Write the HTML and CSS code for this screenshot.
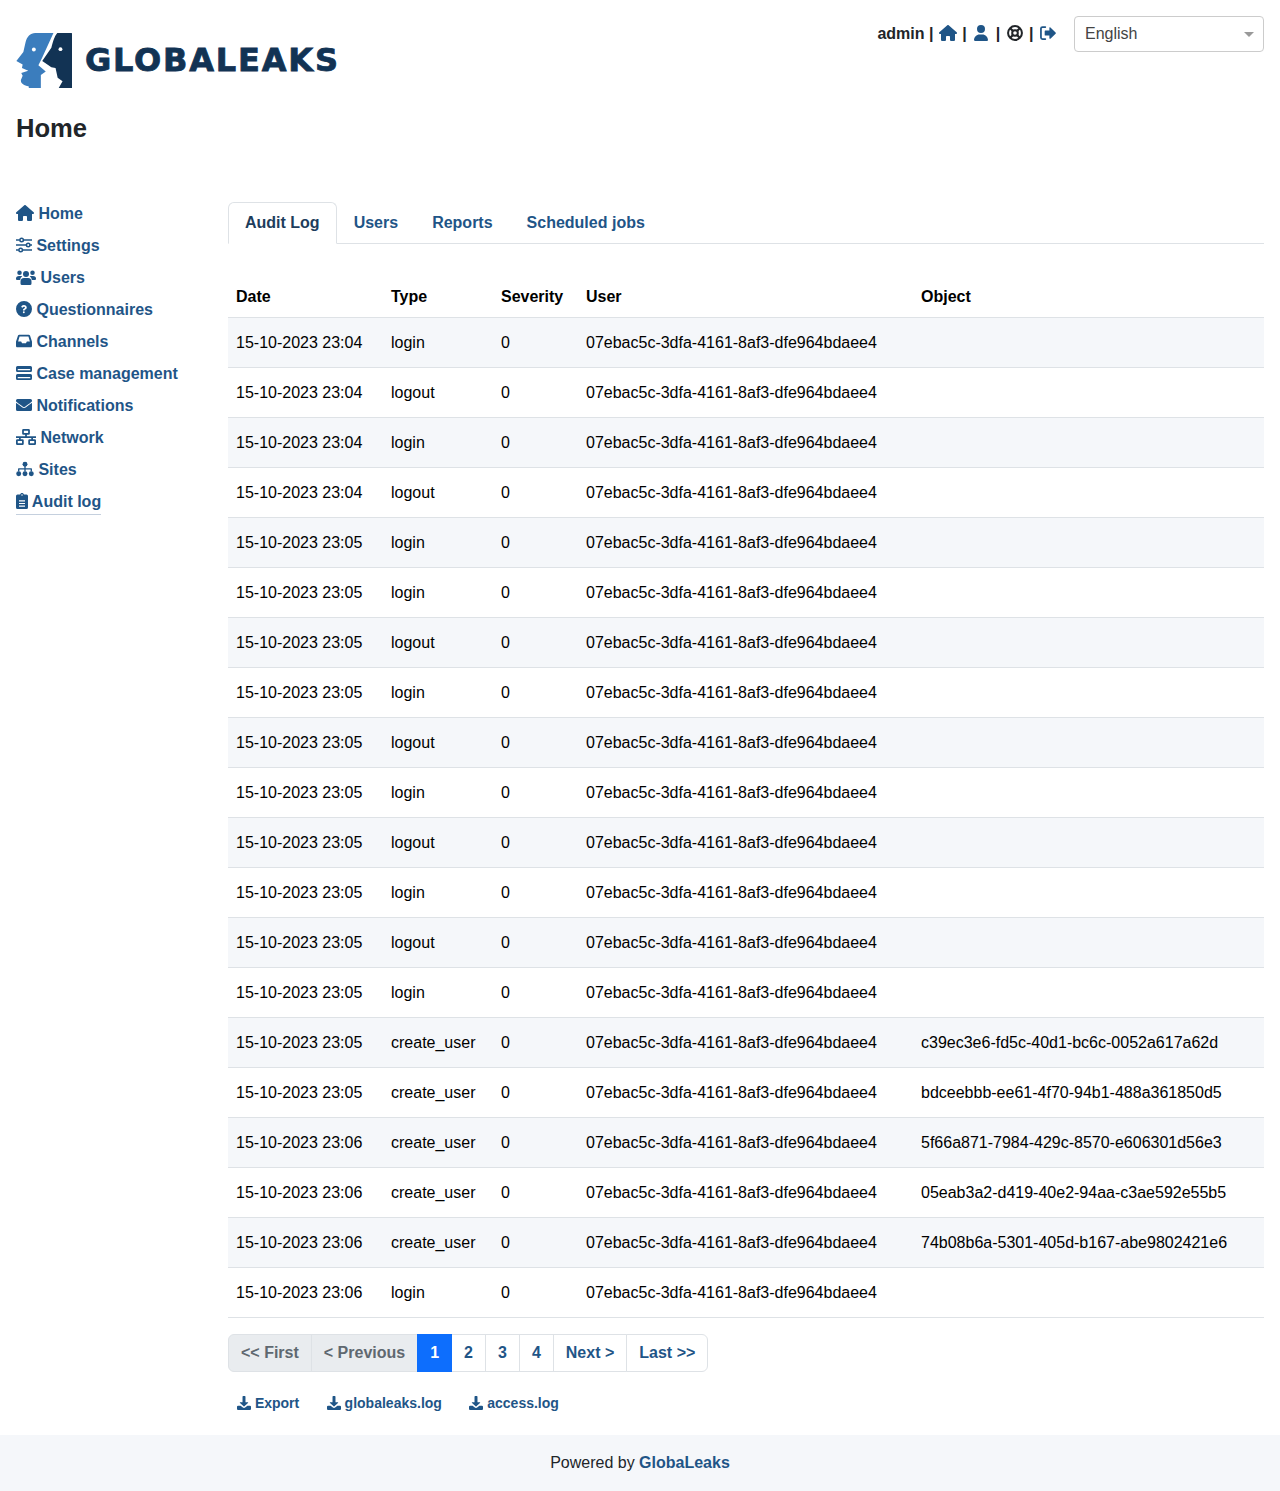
FILE: index.html
```html
<!DOCTYPE html>
<html lang="en">

<head>
    <meta charset="utf-8">
    <meta name="viewport" content="width=device-width, initial-scale=1.0">
    <title>GlobaLeaks - Home</title>
    <link rel="stylesheet" href="styles.css">
</head>

<body>
    <svg class="sprite" xmlns="http://www.w3.org/2000/svg">
        <symbol id="i-home" viewBox="0 0 576 512"><path d="M575.8 255.5c0 18-15 32.1-32 32.1h-32l.7 160.2c0 2.7-.2 5.4-.5 8.1V472c0 22.1-17.9 40-40 40H456c-1.1 0-2.2 0-3.3-.1c-1.4 .1-2.8 .1-4.2 .1H416 392c-22.1 0-40-17.9-40-40V448 384c0-17.7-14.3-32-32-32H256c-17.7 0-32 14.3-32 32v64 24c0 22.1-17.9 40-40 40H160 128.1c-1.5 0-3-.1-4.5-.2c-1.2 .1-2.4 .2-3.6 .2H104c-22.1 0-40-17.9-40-40V360c0-.9 0-1.9 .1-2.8V287.6H32c-18 0-32-14-32-32.1c0-9 3-17 10-24L266.4 8c7-7 15-8 22-8s15 2 21 7L564.8 231.5c8 7 12 15 11 24z"/></symbol>
        <symbol id="i-user" viewBox="0 0 448 512"><path d="M224 256A128 128 0 1 0 224 0a128 128 0 1 0 0 256zm-45.7 48C79.8 304 0 383.8 0 482.3C0 498.7 13.3 512 29.7 512H418.3c16.4 0 29.7-13.3 29.7-29.7C448 383.8 368.2 304 269.7 304H178.3z"/></symbol>
        <symbol id="i-help" viewBox="0 0 512 512"><g fill="none" stroke="currentColor"><circle cx="256" cy="256" r="222" stroke-width="64"/><circle cx="256" cy="256" r="90" stroke-width="64"/><path d="M95 95l96 96M417 95l-96 96M95 417l96-96M417 417l-96-96" stroke-width="72"/></g></symbol>
        <symbol id="i-logout" viewBox="0 0 512 512"><path d="M170 64H80a50 50 0 0 0-50 50v284a50 50 0 0 0 50 50h90" fill="none" stroke="currentColor" stroke-width="56" stroke-linecap="round"/><path d="M300 90a20 20 0 0 1 34-14l165 160a28 28 0 0 1 0 40L334 436a20 20 0 0 1-34-14v-86H170a20 20 0 0 1-20-20V196a20 20 0 0 1 20-20h130z"/></symbol>
        <symbol id="i-sliders" viewBox="0 0 512 512"><g fill="none" stroke="currentColor" stroke-width="48"><path d="M0 96h120M240 96h272M0 256h330M450 256h62M0 416h90M210 416h302"/><circle cx="180" cy="96" r="56"/><circle cx="390" cy="256" r="56"/><circle cx="150" cy="416" r="56"/></g></symbol>
        <symbol id="i-users" viewBox="0 0 640 512"><circle cx="112" cy="120" r="72"/><circle cx="528" cy="120" r="72"/><circle cx="320" cy="160" r="96"/><path d="M0 300a96 80 0 0 1 96-80h60c16 0 30 4 44 10-36 28-60 66-66 122H32a32 32 0 0 1-32-32zM640 300a96 80 0 0 0-96-80h-60c-16 0-30 4-44 10 36 28 60 66 66 122h102a32 32 0 0 0 32-32zM256 288h128a112 112 0 0 1 112 112v64a48 48 0 0 1-48 48H192a48 48 0 0 1-48-48v-64a112 112 0 0 1 112-112z"/></symbol>
        <symbol id="i-question" viewBox="0 0 512 512"><path fill-rule="evenodd" d="M256 0a256 256 0 1 0 0 512 256 256 0 0 0 0-512zm-4 128c52 0 92 30 92 76 0 36-22 52-48 68-16 10-20 16-20 30h-54c0-34 8-48 36-66 20-12 30-18 30-32 0-12-16-22-34-22-20 0-32 10-38 30l-50-20c10-38 44-64 86-64zm-2 200a30 30 0 1 1 0 60 30 30 0 0 1 0-60z"/></symbol>
        <symbol id="i-inbox" viewBox="0 0 576 512"><path fill-rule="evenodd" d="M120 32h336c22 0 40 12 48 30l68 206c3 8 4 14 4 22v142c0 28-22 48-48 48H48c-26 0-48-20-48-48V290c0-8 1-14 4-22l68-206c8-18 26-30 48-30zm8 64L76 272h108l36 64h136l36-64h108L448 96z"/></symbol>
        <symbol id="i-server" viewBox="0 0 512 512"><path fill-rule="evenodd" d="M48 32h416a48 48 0 0 1 48 48v96a48 48 0 0 1-48 48H48a48 48 0 0 1-48-48V80a48 48 0 0 1 48-48zm24 96a20 20 0 0 0 0 40h368a20 20 0 0 0 0-40zM48 288h416a48 48 0 0 1 48 48v96a48 48 0 0 1-48 48H48a48 48 0 0 1-48-48v-96a48 48 0 0 1 48-48zm24 96a20 20 0 0 0 0 40h368a20 20 0 0 0 0-40z"/></symbol>
        <symbol id="i-mail" viewBox="0 0 512 512"><path d="M502 190c4-3 10 0 10 5v205a48 48 0 0 1-48 48H48a48 48 0 0 1-48-48V195c0-5 6-8 10-5 22 17 52 40 154 114 21 15 57 48 92 48s72-33 92-48c102-74 132-97 154-114zM256 320c23 0 56-29 73-42 133-96 143-105 174-129 6-5 9-12 9-19v-18a48 48 0 0 0-48-48H48A48 48 0 0 0 0 112v18c0 7 3 14 9 19 31 24 41 33 174 129 17 13 50 42 73 42z"/></symbol>
        <symbol id="i-network" viewBox="0 0 640 512"><g fill="none" stroke="currentColor" stroke-width="56"><rect x="224" y="28" width="192" height="130" rx="14"/><rect x="28" y="354" width="192" height="130" rx="14"/><rect x="420" y="354" width="192" height="130" rx="14"/><path d="M0 256h640M320 158v98M124 256v98M516 256v98"/></g></symbol>
        <symbol id="i-sitemap" viewBox="0 0 640 512"><circle cx="320" cy="90" r="88"/><path d="M296 150h48v80h200a24 24 0 0 1 24 24v90h-48v-66H344v66h-48v-66H120v66H72v-90a24 24 0 0 1 24-24h200z"/><circle cx="96" cy="424" r="88"/><circle cx="320" cy="424" r="88"/><circle cx="544" cy="424" r="88"/></symbol>
        <symbol id="i-clipboard" viewBox="0 0 384 512"><path fill-rule="evenodd" d="M192 0c30 0 56 20 62 48h82a48 48 0 0 1 48 48v368a48 48 0 0 1-48 48H48a48 48 0 0 1-48-48V96a48 48 0 0 1 48-48h82c6-28 32-48 62-48zm0 36a24 24 0 1 0 0 48 24 24 0 0 0 0-48zM96 232v36h192v-36zm0 84v36h192v-36zm0 84v36h192v-36z"/></symbol>
        <symbol id="i-download" viewBox="0 0 512 512"><path d="M226 0h60a24 24 0 0 1 24 24v200h78c18 0 27 22 14 34L270 378a20 20 0 0 1-28 0L110 258c-13-12-4-34 14-34h78V24a24 24 0 0 1 24-24z"/><path d="M40 352h92l70 62a80 80 0 0 0 108 0l70-62h92a40 40 0 0 1 40 40v80a40 40 0 0 1-40 40H40a40 40 0 0 1-40-40v-80a40 40 0 0 1 40-40z"/></symbol>
    </svg>

    <header class="topo">
        <div class="brand">
            <div class="logo">
                <svg class="logo-mark" viewBox="17 17 160 160" xmlns="http://www.w3.org/2000/svg">
                    <path fill="#3b7dbd" d="M72 20H124L92 90 81 112 102 130 88 140V186H62C56 186 54 180 53 172 40 170 30 164 31 154L36 142 32 134 52 128 34 120 36 110 18 100 38 74 44 48C48 30 58 20 72 20Z"/>
                    <path fill="#123354" d="M135 20H172C180 20 184 24 184 32V174C184 182 180 186 172 186H134L150 158 136 148 130 120 118 118 92 100 118 62C122 48 126 30 135 20Z"/>
                    <circle fill="#fff" cx="68" cy="67" r="5.5"/>
                    <circle fill="#fff" cx="144" cy="66" r="5.5"/>
                </svg>
                <span class="logo-text">GLOBALEAKS</span>
            </div>
            <h1>Home</h1>
        </div>
        <div class="konto">
            <div class="bruger">
                <span>admin</span> |
                <a href="#"><svg class="ikon fw"><use href="#i-home"/></svg></a> |
                <a href="#"><svg class="ikon fw"><use href="#i-user"/></svg></a> |
                <a href="#" class="dark"><svg class="ikon fw"><use href="#i-help"/></svg></a> |
                <a href="#"><svg class="ikon fw"><use href="#i-logout"/></svg></a>
            </div>
            <div class="sprogvalg">
                <select>
                    <option>English</option>
                </select>
            </div>
        </div>
    </header>

    <div class="indhold">
        <nav class="sidemenu">
            <a href="#"><svg class="ikon w18"><use href="#i-home"/></svg> Home</a>
            <a href="#"><svg class="ikon w16"><use href="#i-sliders"/></svg> Settings</a>
            <a href="#"><svg class="ikon w20"><use href="#i-users"/></svg> Users</a>
            <a href="#"><svg class="ikon w16"><use href="#i-question"/></svg> Questionnaires</a>
            <a href="#"><svg class="ikon w16"><use href="#i-inbox"/></svg> Channels</a>
            <a href="#"><svg class="ikon w16"><use href="#i-server"/></svg> Case management</a>
            <a href="#"><svg class="ikon w16"><use href="#i-mail"/></svg> Notifications</a>
            <a href="#"><svg class="ikon w20"><use href="#i-network"/></svg> Network</a>
            <a href="#"><svg class="ikon w18"><use href="#i-sitemap"/></svg> Sites</a>
            <a href="#" class="valgt"><svg class="ikon w12"><use href="#i-clipboard"/></svg> Audit log</a>
        </nav>

        <main>
            <ul class="faner">
                <li class="aktiv"><a href="#">Audit Log</a></li>
                <li><a href="#">Users</a></li>
                <li><a href="#">Reports</a></li>
                <li><a href="#">Scheduled jobs</a></li>
            </ul>

            <table class="log">
                <thead>
                    <tr><th class="c-date">Date</th><th class="c-type">Type</th><th class="c-sev">Severity</th><th class="c-user">User</th><th>Object</th></tr>
                </thead>
                <tbody>
                    <tr><td>15-10-2023 23:04</td><td>login</td><td>0</td><td>07ebac5c-3dfa-4161-8af3-dfe964bdaee4</td><td></td></tr>
                    <tr><td>15-10-2023 23:04</td><td>logout</td><td>0</td><td>07ebac5c-3dfa-4161-8af3-dfe964bdaee4</td><td></td></tr>
                    <tr><td>15-10-2023 23:04</td><td>login</td><td>0</td><td>07ebac5c-3dfa-4161-8af3-dfe964bdaee4</td><td></td></tr>
                    <tr><td>15-10-2023 23:04</td><td>logout</td><td>0</td><td>07ebac5c-3dfa-4161-8af3-dfe964bdaee4</td><td></td></tr>
                    <tr><td>15-10-2023 23:05</td><td>login</td><td>0</td><td>07ebac5c-3dfa-4161-8af3-dfe964bdaee4</td><td></td></tr>
                    <tr><td>15-10-2023 23:05</td><td>login</td><td>0</td><td>07ebac5c-3dfa-4161-8af3-dfe964bdaee4</td><td></td></tr>
                    <tr><td>15-10-2023 23:05</td><td>logout</td><td>0</td><td>07ebac5c-3dfa-4161-8af3-dfe964bdaee4</td><td></td></tr>
                    <tr><td>15-10-2023 23:05</td><td>login</td><td>0</td><td>07ebac5c-3dfa-4161-8af3-dfe964bdaee4</td><td></td></tr>
                    <tr><td>15-10-2023 23:05</td><td>logout</td><td>0</td><td>07ebac5c-3dfa-4161-8af3-dfe964bdaee4</td><td></td></tr>
                    <tr><td>15-10-2023 23:05</td><td>login</td><td>0</td><td>07ebac5c-3dfa-4161-8af3-dfe964bdaee4</td><td></td></tr>
                    <tr><td>15-10-2023 23:05</td><td>logout</td><td>0</td><td>07ebac5c-3dfa-4161-8af3-dfe964bdaee4</td><td></td></tr>
                    <tr><td>15-10-2023 23:05</td><td>login</td><td>0</td><td>07ebac5c-3dfa-4161-8af3-dfe964bdaee4</td><td></td></tr>
                    <tr><td>15-10-2023 23:05</td><td>logout</td><td>0</td><td>07ebac5c-3dfa-4161-8af3-dfe964bdaee4</td><td></td></tr>
                    <tr><td>15-10-2023 23:05</td><td>login</td><td>0</td><td>07ebac5c-3dfa-4161-8af3-dfe964bdaee4</td><td></td></tr>
                    <tr><td>15-10-2023 23:05</td><td>create_user</td><td>0</td><td>07ebac5c-3dfa-4161-8af3-dfe964bdaee4</td><td>c39ec3e6-fd5c-40d1-bc6c-0052a617a62d</td></tr>
                    <tr><td>15-10-2023 23:05</td><td>create_user</td><td>0</td><td>07ebac5c-3dfa-4161-8af3-dfe964bdaee4</td><td>bdceebbb-ee61-4f70-94b1-488a361850d5</td></tr>
                    <tr><td>15-10-2023 23:06</td><td>create_user</td><td>0</td><td>07ebac5c-3dfa-4161-8af3-dfe964bdaee4</td><td>5f66a871-7984-429c-8570-e606301d56e3</td></tr>
                    <tr><td>15-10-2023 23:06</td><td>create_user</td><td>0</td><td>07ebac5c-3dfa-4161-8af3-dfe964bdaee4</td><td>05eab3a2-d419-40e2-94aa-c3ae592e55b5</td></tr>
                    <tr><td>15-10-2023 23:06</td><td>create_user</td><td>0</td><td>07ebac5c-3dfa-4161-8af3-dfe964bdaee4</td><td>74b08b6a-5301-405d-b167-abe9802421e6</td></tr>
                    <tr><td>15-10-2023 23:06</td><td>login</td><td>0</td><td>07ebac5c-3dfa-4161-8af3-dfe964bdaee4</td><td></td></tr>
                </tbody>
            </table>

            <ul class="sider">
                <li class="spaerret"><a href="#">&lt;&lt; First</a></li>
                <li class="spaerret"><a href="#">&lt; Previous</a></li>
                <li class="aktiv"><a href="#">1</a></li>
                <li><a href="#">2</a></li>
                <li><a href="#">3</a></li>
                <li><a href="#">4</a></li>
                <li><a href="#">Next &gt;</a></li>
                <li><a href="#">Last &gt;&gt;</a></li>
            </ul>

            <div class="hentninger">
                <a href="#"><svg class="ikon"><use href="#i-download"/></svg> Export</a>
                <a href="#"><svg class="ikon"><use href="#i-download"/></svg> globaleaks.log</a>
                <a href="#"><svg class="ikon"><use href="#i-download"/></svg> access.log</a>
            </div>
        </main>
    </div>

    <footer>Powered by <a href="#">GlobaLeaks</a></footer>
</body>

</html>
```

FILE: styles.css
```css
* {
    box-sizing: border-box;
    margin: 0px;
    padding: 0px;
}

body {
    font-family: "Liberation Sans", Arial, sans-serif;
    font-size: 16px;
    line-height: 24px;
    color: #212529;
    background-color: #fff;
}

a {
    color: #1f5587;
    text-decoration: none;
    font-weight: bold;
}

ul {
    list-style: none;
}

.sprite {
    display: none;
}

.ikon {
    width: 18px;
    height: 16px;
    fill: currentColor;
    vertical-align: -2px;
}

.w12 { width: 12px; }
.w16 { width: 16px; }
.w18 { width: 18px; }
.w20 { width: 20px; }
.fw { width: 20px; }

/* top */
.topo {
    display: flex;
    justify-content: space-between;
    padding: 16px 16px 0px 16px;
    height: 197px;
}

.logo {
    display: flex;
    align-items: center;
    gap: 13px;
    margin-top: 16px;
    height: 56px;
}

.logo-mark {
    width: 56px;
    height: 56px;
}

.logo-text {
    font-family: "DejaVu Sans", "Liberation Sans", sans-serif;
    font-weight: bold;
    font-size: 32px;
    letter-spacing: 1.8px;
    -webkit-text-stroke: 0.8px #123354;
    line-height: 56px;
    color: #123354;
}

h1 {
    font-size: 25.6px;
    line-height: 30px;
    margin-top: 25px;
    color: #212529;
}

.konto {
    display: flex;
    gap: 16px;
}

.bruger {
    font-weight: bold;
    line-height: 36px;
}

.bruger .dark {
    color: #212529;
}

.sprogvalg {
    position: relative;
    width: 190px;
    height: 36px;
}

.sprogvalg::after {
    content: "";
    position: absolute;
    right: 10px;
    top: 16px;
    border-left: 5px solid transparent;
    border-right: 5px solid transparent;
    border-top: 5px solid #999;
}

select {
    appearance: none;
    width: 100%;
    height: 100%;
    padding: 0px 10px 2px 10px;
    font-family: inherit;
    font-size: 16px;
    color: #444;
    background-color: #fff;
    border: 1px solid #ccc;
    border-radius: 4px;
}

/* content */
.indhold {
    display: flex;
    padding: 0px 16px;
}

.sidemenu {
    width: 212px;
    flex-shrink: 0;
    display: flex;
    flex-direction: column;
    align-items: flex-start;
    padding-top: 1px;
}

.sidemenu a {
    height: 32px;
    padding-top: 4px;
}

.sidemenu .valgt {
    height: 29px;
    border-bottom: 1px solid #c5d0de;
}

main {
    flex: 1;
    min-width: 0;
    padding-top: 5px;
}

.faner {
    display: flex;
    border-bottom: 1px solid #dee2e6;
    height: 42px;
}

.faner a {
    display: block;
    padding: 8px 16px;
    border: 1px solid transparent;
    height: 42px;
}

.faner .aktiv a {
    color: #1d3d5c;
    background-color: #fff;
    border-color: #dee2e6 #dee2e6 #fff;
    border-radius: 6px 6px 0px 0px;
}

.log {
    width: 100%;
    margin-top: 31px;
    border-collapse: collapse;
    table-layout: fixed;
}

.log th {
    text-align: left;
    padding: 9px 8px 7px 8px;
    height: 42px;
    color: #000;
    border-bottom: 1px solid #dee2e6;
}

.log td {
    padding: 9px 8px 7px 8px;
    height: 50px;
    color: #000;
    border-bottom: 1px solid #dee2e6;
}

.log tbody tr:nth-child(odd) td {
    background-color: #f5f7fa;
}

.c-date { width: 155px; }
.c-type { width: 110px; }
.c-sev { width: 85px; }
.c-user { width: 335px; }

.sider {
    display: inline-flex;
    margin-top: 16px;
    vertical-align: top;
}

.sider a {
    display: block;
    padding: 6px 12px;
    height: 38px;
    border: 1px solid #dee2e6;
    margin-left: -1px;
    background-color: #fff;
}

.sider li:first-child a {
    margin-left: 0px;
    border-radius: 6px 0px 0px 6px;
}

.sider li:last-child a {
    border-radius: 0px 6px 6px 0px;
}

.sider .spaerret a {
    color: #5f6870;
    background-color: #e9ecef;
}

.sider .aktiv a {
    color: #fff;
    background-color: #0d6efd;
    border-color: #0d6efd;
    position: relative;
}

.hentninger {
    display: flex;
    gap: 27.5px;
    padding-left: 9px;
    margin-top: 19px;
    margin-bottom: 20px;
    font-size: 14px;
}

.hentninger .ikon {
    width: 14px;
    height: 14px;
    vertical-align: -2px;
}

footer {
    height: 56px;
    padding-top: 16px;
    text-align: center;
    background-color: #f5f7fa;
}
```
